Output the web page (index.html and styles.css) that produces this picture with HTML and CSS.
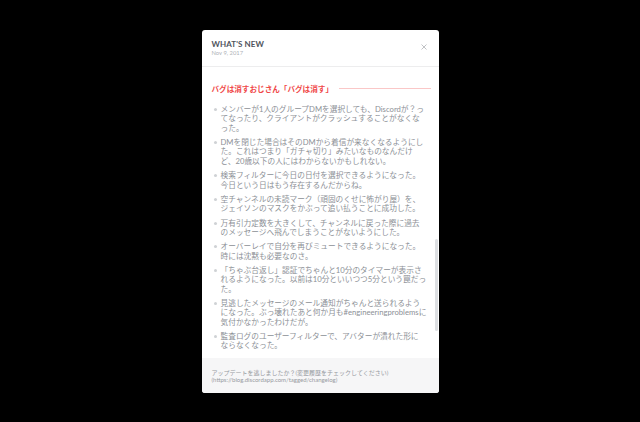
FILE: index.html
```html
<!DOCTYPE html>
<html lang="ja">
<head>
<meta charset="utf-8">
<title>What's New</title>
<link rel="stylesheet" href="styles.css">
</head>
<body>
<div class="modal">
  <div class="header">
    <div class="titles">
      <div class="title">What's New</div>
      <div class="date">Nov 9, 2017</div>
    </div>
    <svg class="close" width="6" height="6" viewBox="0 0 6 6"><path d="M0.5 0.5L5.5 5.5M5.5 0.5L0.5 5.5" stroke="#b9bbbe" stroke-width="0.9" fill="none"/></svg>
  </div>
  <div class="body">
    <div class="section-title"><span>バグは消すおじさん「バグは消す」</span></div>
    <ul class="list">
      <li><span>メンバーが1人のグループDMを選択しても、Discordが？っ<br>てなったり、クライアントがクラッシュすることがなくな<br>った。</span></li>
      <li><span>DMを閉じた場合はそのDMから着信が来なくなるようにし<br>た。これはつまり「ガチャ切り」みたいなものなんだけ<br>ど、20歳以下の人にはわからないかもしれない。</span></li>
      <li><span>検索フィルターに今日の日付を選択できるようになった。<br>今日という日はもう存在するんだからね。</span></li>
      <li><span>空チャンネルの未読マーク（頑固のくせに怖がり屋）を、<br>ジェイソンのマスクをかぶって追い払うことに成功した。</span></li>
      <li><span>万有引力定数を大きくして、チャンネルに戻った際に過去<br>のメッセージへ飛んでしまうことがないようにした。</span></li>
      <li><span>オーバーレイで自分を再びミュートできるようになった。<br>時には沈黙も必要なのさ。</span></li>
      <li><span>「ちゃぶ台返し」認証でちゃんと10分のタイマーが表示さ<br>れるようになった。以前は10分といいつつ5分という罠だっ<br>た。</span></li>
      <li><span>見逃したメッセージのメール通知がちゃんと送られるよう<br>になった。ぶっ壊れたあと何か月も#engineeringproblemsに<br>気付かなかったわけだが。</span></li>
      <li><span>監査ログのユーザーフィルターで、アバターが潰れた形に<br>ならなくなった。</span></li>
    </ul>
  </div>
  <div class="footer">
    <div class="foot-line">アップデートを逃しましたか？(変更履歴をチェックしてください)</div>
    <div class="foot-line">(https://blog.discordapp.com/tagged/changelog)</div>
  </div>
  <div class="scroll-thumb"></div>
</div>
</body>
</html>
```
FILE: styles.css
```css
html, body {
  margin: 0;
  padding: 0;
}
body {
  background: #000;
  height: 100vh;
  display: flex;
  align-items: center;
  justify-content: center;
  font-family: Lato, "Noto Sans CJK JP", sans-serif;
}
.modal {
  position: relative;
  width: 237px;
  height: 363px;
  background: #fff;
  border-radius: 3px;
  overflow: hidden;
  display: flex;
  flex-direction: column;
}
.header {
  flex: none;
  display: flex;
  justify-content: space-between;
  align-items: center;
  padding: 9px 12px 10px 10px;
  border-bottom: 1px solid #ededee;
}
.title {
  font-size: 8px;
  line-height: 10px;
  font-weight: 700;
  text-transform: uppercase;
  color: #4f545c;
  letter-spacing: 0.1px;
}
.date {
  font-size: 5.8px;
  line-height: 7px;
  color: #b0b3b8;
}
.close {
  display: block;
}
.body {
  flex: 1;
  overflow: hidden;
  padding: 17px 8px 0 10px;
}
.section-title {
  display: flex;
  align-items: center;
  gap: 6px;
  font-family: "Noto Sans CJK JP", sans-serif;
  font-size: 7.6px;
  line-height: 10px;
  font-weight: 700;
  color: #f04747;
  margin-bottom: 11.6px;
}
.section-title::after {
  content: "";
  flex: 1;
  height: 1px;
  background: rgba(240, 71, 71, 0.3);
}
.list {
  list-style: none;
  margin: 0;
  padding: 0 0 0 2.5px;
}
.list li {
  display: flex;
  align-items: flex-start;
  font-size: 7.7px;
  line-height: 9.35px;
  color: #8c9096;
  white-space: nowrap;
  margin-bottom: 5px;
}
.list li::before {
  content: "";
  flex: none;
  width: 3px;
  height: 3px;
  border-radius: 50%;
  background: #cfd2d5;
  margin: 3.2px 3.5px 0 0;
}
.footer {
  flex: none;
  height: 35px;
  box-sizing: border-box;
  padding: 11px 10px 0 10px;
  background: #f6f6f7;
}
.foot-line {
  font-size: 6px;
  line-height: 7.4px;
  color: #979a9f;
  white-space: nowrap;
}
.scroll-thumb {
  position: absolute;
  right: 0.5px;
  top: 209px;
  width: 3px;
  height: 92px;
  border-radius: 2px;
  background: #dddfe2;
}
```
